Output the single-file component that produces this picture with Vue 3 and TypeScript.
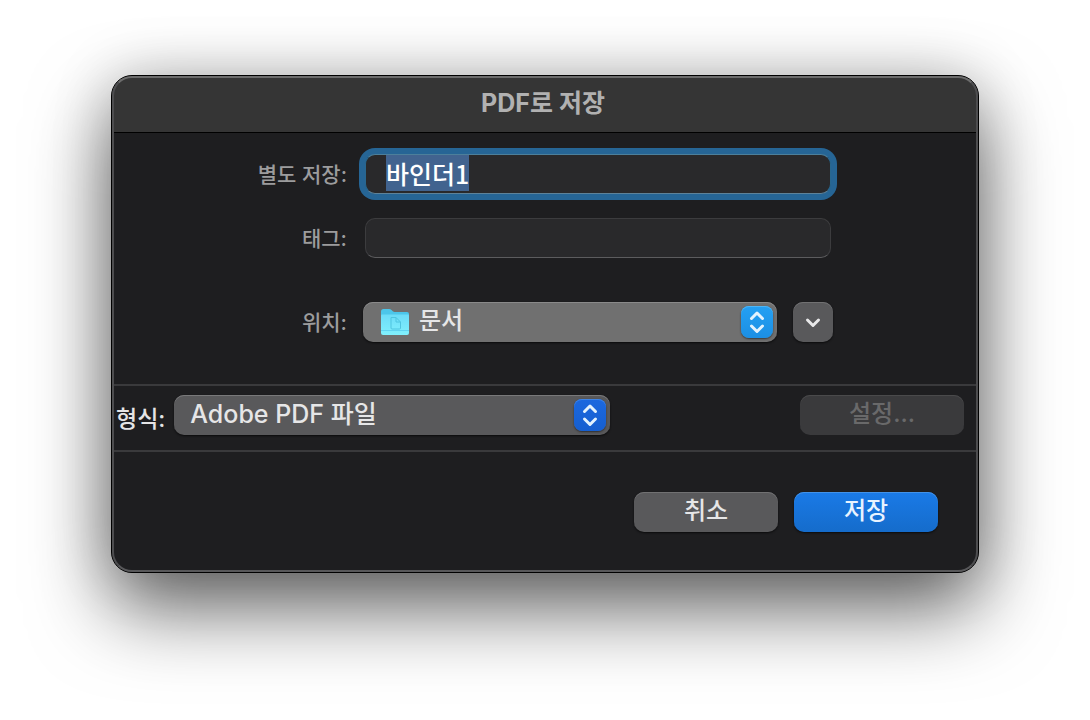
<script setup lang="ts">
import { onMounted, ref } from 'vue'

const fileName = ref('바인더1')
const tags = ref('')
const location = ref('documents')
const format = ref('pdf')
const nameInput = ref<HTMLInputElement | null>(null)

onMounted(() => {
  nameInput.value?.focus()
  nameInput.value?.select()
})
</script>

<template>
  <main class="desktop">
    <form class="dialog" aria-labelledby="dialog-title" @submit.prevent>
      <header class="titlebar">
        <h1 id="dialog-title">PDF로 저장</h1>
      </header>

      <section class="fields">
        <label for="file-name">별도 저장:</label>
        <input id="file-name" ref="nameInput" v-model="fileName" class="text-field" type="text" autocomplete="off" spellcheck="false" />

        <label for="tags">태그:</label>
        <input id="tags" v-model="tags" class="text-field" type="text" autocomplete="off" />

        <label for="location">위치:</label>
        <div class="location">
          <div class="popup popup-location">
            <select id="location" v-model="location">
              <option value="documents">문서</option>
            </select>
            <svg class="folder" viewBox="0 0 30 28" aria-hidden="true">
              <defs>
                <linearGradient id="folder-front" x1="0" y1="0" x2="0" y2="1">
                  <stop offset="0" stop-color="#6cdcf8" />
                  <stop offset="1" stop-color="#80f0fd" />
                </linearGradient>
              </defs>
              <path d="M1 3.500Q1 1 3.500 1H9q1.500 0 2.500 1l1.300 1.200q.8.8 2 .8H27q2 0 2 2v4H1z" fill="#4cc6ea" />
              <path d="M1 7.500Q1 6.500 2 6.500h26q1 0 1 1V25q0 2-2 2H3q-2 0-2-2z" fill="url(#folder-front)" />
              <path d="M1 22.500h28" stroke="#5fd3f0" stroke-width="1" />
              <path d="M11 9.500h5l4.500 4.500V20q0 1-1 1H12q-1 0-1-1zM16 9.500V14h4.500" fill="none" stroke="#4fc4e0" stroke-width="1" />
            </svg>
            <span class="stepper" aria-hidden="true">
              <svg viewBox="0 0 32 32"><path d="M10.500 12.500L16 7l5.500 5.500M10.500 20L16 25.500 21.500 20" /></svg>
            </span>
          </div>
          <button class="button expand" type="button" aria-label="확장">
            <svg viewBox="0 0 40 40" aria-hidden="true"><path d="M14.500 18l5.500 5.500L25.500 18" /></svg>
          </button>
        </div>
      </section>

      <section class="format">
        <label for="format">형식:</label>
        <div class="popup popup-format">
          <select id="format" v-model="format">
            <option value="pdf">Adobe PDF 파일</option>
          </select>
          <span class="stepper" aria-hidden="true">
            <svg viewBox="0 0 32 32"><path d="M10.500 12.500L16 7l5.500 5.500M10.500 20L16 25.500 21.500 20" /></svg>
          </span>
        </div>
        <button class="button settings" type="button" disabled>설정...</button>
      </section>

      <footer class="actions">
        <button class="button" type="button">취소</button>
        <button class="button primary" type="submit">저장</button>
      </footer>
    </form>
  </main>
</template>

<style>
body {
  margin: 0;
  background: #fff;
}
</style>

<style scoped>
* {
  box-sizing: border-box;
}

.desktop {
  min-height: 100vh;
  padding: 75px 111px 80px;
  overflow: hidden;
  font-family: Inter, "Noto Sans CJK KR", sans-serif;
  font-weight: 500;
}

.dialog {
  position: relative;
  border: 1px solid #000;
  border-radius: 21px;
  background: #1e1e20;
  box-shadow: 0 36px 80px rgba(0, 0, 0, 0.6), 0 0 60px rgba(0, 0, 0, 0.18);
}

.dialog::after {
  content: "";
  position: absolute;
  inset: 0;
  border: 2px solid #4d4d4f;
  border-top-color: #6c6c6c;
  border-bottom-color: #58585a;
  border-radius: 20px;
  pointer-events: none;
}

.titlebar {
  display: flex;
  align-items: center;
  justify-content: center;
  height: 57px;
  padding: 0 4px 2px 0;
  border-bottom: 1px solid #000;
  border-radius: 20px 20px 0 0;
  background: #353535;
}

h1 {
  margin: 0;
  color: #b1b1b1;
  font-size: 25px;
  font-weight: 700;
  line-height: 36px;
}

.fields {
  display: grid;
  grid-template-columns: 235px minmax(0, 1fr);
  gap: 24px 16px;
  align-items: center;
  padding: 21px 145px 42px 0;
}

.fields label {
  padding-top: 2px;
  color: #9c9c9d;
  font-size: 21px;
  line-height: 30px;
  text-align: right;
}

.text-field {
  height: 40px;
  min-width: 0;
  margin: 0 2px;
  padding: 0 20px 2px;
  border: 1px solid #3c3c3e;
  border-bottom-color: #5c5c5e;
  border-radius: 10px;
  outline: none;
  background: #29292b;
  color: #fff;
  font-family: "Noto Sans CJK KR", sans-serif;
  font-size: 25px;
  font-weight: 500;
  line-height: 34px;
}

.text-field:focus {
  border-color: #29678f;
  border-top-color: #4c7f9b;
  border-bottom-color: #5d8299;
  box-shadow: 0 0 0 6px #266595;
}

.text-field::selection {
  background: #41638f;
  color: #fff;
}

.location {
  display: flex;
  gap: 16px;
  margin-top: 20px;
}

.fields label[for="location"] {
  margin-top: 20px;
}

.popup {
  position: relative;
  flex: 1;
  min-width: 0;
}

select {
  display: block;
  width: 100%;
  height: 40px;
  padding: 0 44px 2px 16px;
  border: 0;
  border-radius: 10px;
  outline: none;
  appearance: none;
  background: #59595b;
  box-shadow: inset 0 1px #79797a, 0 1px 2px #0b0b0c;
  color: #e6e6e7;
  font-family: inherit;
  font-size: 24px;
  font-weight: 500;
  line-height: 36px;
}

.popup-location select {
  padding-left: 56px;
  background: #707070;
  box-shadow: inset 0 1px #8a8a8a, 0 1px 2px #0b0b0c;
}

.folder {
  position: absolute;
  top: 6px;
  left: 17px;
  width: 30px;
  height: 28px;
  pointer-events: none;
}

.stepper {
  position: absolute;
  top: 4px;
  right: 4px;
  width: 32px;
  height: 32px;
  border-radius: 8px;
  background: linear-gradient(#1b68df, #165fd0);
  box-shadow: inset 0 1px #3f84e6, 0 1px 2px rgba(0, 0, 0, 0.5);
  pointer-events: none;
}

.popup-location .stepper {
  background: linear-gradient(#24a0f3, #1c8fe4);
  box-shadow: inset 0 1px #4db5f5, 0 1px 2px rgba(0, 0, 0, 0.5);
}

.stepper svg,
.expand svg {
  display: block;
  width: 100%;
  height: 100%;
  fill: none;
  stroke: #e3f2fd;
  stroke-width: 3;
  stroke-linecap: round;
  stroke-linejoin: round;
}

.button {
  width: 144px;
  height: 40px;
  padding: 0 0 2px;
  border: 0;
  border-radius: 10px;
  background: #59595b;
  box-shadow: inset 0 1px #717172, 0 1px 2px #0b0b0c;
  color: #e6e6e7;
  font-family: inherit;
  font-size: 24px;
  font-weight: 500;
  line-height: 36px;
}

.expand {
  width: 40px;
  padding: 0;
}

.expand svg {
  stroke: #e8e8e9;
}

.format {
  display: flex;
  align-items: center;
  gap: 9px;
  padding: 9px 14px 15px 4px;
  border-top: 2px solid #3a3a3c;
  border-bottom: 2px solid #3a3a3c;
}

.format label {
  padding-top: 8px;
  color: #e4e4e5;
  font-size: 23px;
  line-height: 32px;
}

.popup-format {
  margin-right: 181px;
}

.popup-format select {
  font-size: 25px;
}

.settings {
  width: 164px;
  background: #3a3a3c;
  box-shadow: inset 0 1px #4a4a4b;
  color: #69696a;
}

.primary {
  background: linear-gradient(#1a7ae7, #156ccb);
  box-shadow: inset 0 1px #4292e8, 0 1px 2px #0b0b0c;
  color: #e8f3ff;
}

.actions {
  display: flex;
  justify-content: flex-end;
  gap: 16px;
  padding: 40px;
}
</style>
